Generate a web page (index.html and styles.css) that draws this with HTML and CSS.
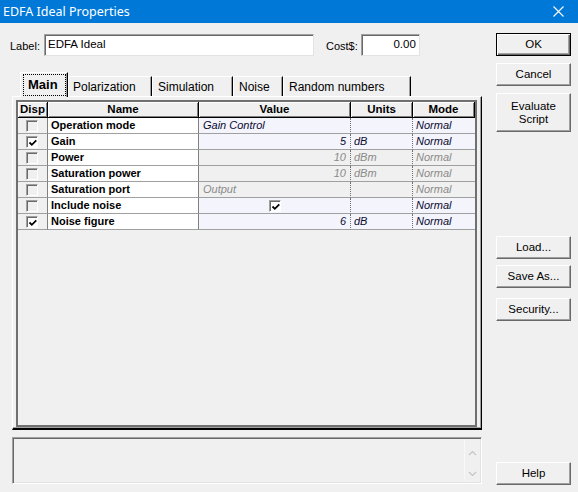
FILE: index.html
```html
<!DOCTYPE html>
<html>
<head>
<meta charset="utf-8">
<link rel="stylesheet" href="styles.css">
</head>
<body>
<div class="titlebar">
  <span class="title">EDFA Ideal Properties</span>
  <svg class="close" width="11" height="11" viewBox="0 0 11 11"><path d="M0.5 0.5 L10.5 10.5 M10.5 0.5 L0.5 10.5" stroke="#fff" stroke-width="1.1" fill="none"/></svg>
</div>
<div class="content">
  <div class="left">
    <div class="labelrow">
      <span class="lbl">Label:</span>
      <div class="input name-input">EDFA Ideal</div>
      <span class="lbl cost">Cost$:</span>
      <div class="input cost-input">0.00</div>
    </div>
    <div class="tabs">
      <div class="tab selected"><span class="focus">Main</span></div>
      <div class="tab t-pol">Polarization</div>
      <div class="tab t-sim">Simulation</div>
      <div class="tab t-noise">Noise</div>
      <div class="tab t-rand">Random numbers</div>
    </div>
    <div class="panel">
      <div class="grid">
        <div class="hd">Disp</div>
        <div class="hd">Name</div>
        <div class="hd">Value</div>
        <div class="hd">Units</div>
        <div class="hd">Mode</div>

        <div class="c disp"><span class="cb"></span></div>
        <div class="c name">Operation mode</div>
        <div class="c val en">Gain Control</div>
        <div class="c unit en"></div>
        <div class="c mode en">Normal</div>

        <div class="c disp"><span class="cb on"><svg width="10" height="10" viewBox="0 0 10 10"><path d="M1.5 4.5 L3.8 6.8 L8.3 2.3" stroke="#000" stroke-width="1.8" fill="none"/></svg></span></div>
        <div class="c name">Gain</div>
        <div class="c val en num">5</div>
        <div class="c unit en">dB</div>
        <div class="c mode en">Normal</div>

        <div class="c disp"><span class="cb"></span></div>
        <div class="c name">Power</div>
        <div class="c val dis num">10</div>
        <div class="c unit dis">dBm</div>
        <div class="c mode dis">Normal</div>

        <div class="c disp"><span class="cb"></span></div>
        <div class="c name">Saturation power</div>
        <div class="c val dis num">10</div>
        <div class="c unit dis">dBm</div>
        <div class="c mode dis">Normal</div>

        <div class="c disp"><span class="cb"></span></div>
        <div class="c name">Saturation port</div>
        <div class="c val dis">Output</div>
        <div class="c unit dis"></div>
        <div class="c mode dis">Normal</div>

        <div class="c disp"><span class="cb"></span></div>
        <div class="c name">Include noise</div>
        <div class="c val en center"><span class="cb on"><svg width="10" height="10" viewBox="0 0 10 10"><path d="M1.5 4.5 L3.8 6.8 L8.3 2.3" stroke="#000" stroke-width="1.8" fill="none"/></svg></span></div>
        <div class="c unit en"></div>
        <div class="c mode en">Normal</div>

        <div class="c disp"><span class="cb on"><svg width="10" height="10" viewBox="0 0 10 10"><path d="M1.5 4.5 L3.8 6.8 L8.3 2.3" stroke="#000" stroke-width="1.8" fill="none"/></svg></span></div>
        <div class="c name">Noise figure</div>
        <div class="c val en num">6</div>
        <div class="c unit en">dB</div>
        <div class="c mode en">Normal</div>
      </div>
    </div>
    <div class="msgbox">
      <div class="scroll">
        <svg width="9" height="6" viewBox="0 0 9 6"><path d="M1 5 L4.5 1.5 L8 5" stroke="#c4c4c4" stroke-width="1.2" fill="none"/></svg>
        <svg width="9" height="6" viewBox="0 0 9 6"><path d="M1 1 L4.5 4.5 L8 1" stroke="#c4c4c4" stroke-width="1.2" fill="none"/></svg>
      </div>
    </div>
  </div>
  <div class="right">
    <div class="btn default b-ok">OK</div>
    <div class="btn b-cancel">Cancel</div>
    <div class="btn tall b-eval">Evaluate<br>Script</div>
    <div class="btn b-load">Load...</div>
    <div class="btn b-save">Save As...</div>
    <div class="btn b-sec">Security...</div>
    <div class="btn b-help">Help</div>
  </div>
</div>
</body>
</html>
```
FILE: styles.css
```css
* { box-sizing: border-box; }
body {
  margin: 0;
  width: 578px;
  height: 492px;
  overflow: hidden;
  background: #f0f0f0;
  font-family: "Liberation Sans", Arial, sans-serif;
  font-size: 11px;
  color: #000;
}
.titlebar {
  height: 23px;
  background: #0078d7;
  color: #fff;
  display: flex;
  align-items: center;
  justify-content: space-between;
  padding: 0 14px 1px 3px;
}
.title {
  font-family: "Noto Sans", sans-serif;
  font-size: 12.5px;
}
.content {
  display: flex;
}
.left {
  margin-left: 12px;
  width: 470px;
}
.labelrow {
  margin-top: 11px;
  margin-left: -2px;
  height: 22px;
  display: flex;
  align-items: center;
}
.lbl { padding-top: 1px; }
.input {
  height: 22px;
  background: #fff;
  border: 1px solid;
  border-color: #a0a0a0 #e3e3e3 #e3e3e3 #a0a0a0;
  box-shadow: inset 1px 1px #696969;
  padding: 3px 3px 0 3px;
  font-size: 11.5px;
}
.name-input { width: 270px; margin-left: 4px; }
.cost { margin-left: 12px; }
.cost-input { width: 59px; margin-left: 3px; text-align: right; }

.tabs {
  margin-top: 16px;
  height: 24px;
  display: flex;
  align-items: flex-end;
  padding-left: 8px;
  position: relative;
  z-index: 1;
}
.tab {
  height: 20px;
  border-top: 1px solid #fff;
  border-left: 1px solid #fff;
  border-right: 1px solid #000;
  box-shadow: inset -1px 0 #a0a0a0;
  font-size: 12px;
  padding: 3px 0 0 4px;
  margin-bottom: 0;
}
.tab.selected {
  height: 25px;
  width: 48px;
  margin-bottom: -1px;
  background: #f0f0f0;
  padding: 1px 0 0 2px;
  font-weight: bold;
  font-size: 13px;
}
.focus {
  display: block;
  width: 43px;
  height: 22px;
  border: 1px dotted #000;
  padding: 2px 0 0 4px;
}
.t-pol { width: 84px; }
.t-sim { width: 81px; padding-left: 5px; }
.t-noise { width: 50px; padding-left: 5px; }
.t-rand { width: 128px; padding-left: 5px; }

.panel {
  height: 334px;
  border-top: 1px solid #fff;
  border-left: 1px solid #fff;
  border-right: 1px solid #000;
  border-bottom: 2px solid #000;
  box-shadow: inset -1px -1px #a0a0a0;
  padding: 3px 0 0 3px;
}
.grid {
  width: 461px;
  height: 327px;
  border: 2px solid #707070;
  display: grid;
  grid-template-columns: 30px 151px 152px 62px 62px;
  grid-auto-rows: 16px;
  align-content: start;
}
.hd {
  font-weight: bold;
  font-size: 11.5px;
  text-align: center;
  border-right: 1px solid #000;
  border-bottom: 1px solid #000;
  box-shadow: inset 1px 1px #fff, inset -1px -1px #808080;
  line-height: 15px;
}
.hd:first-child { text-align: left; padding-left: 2px; }
.c {
  border-bottom: 1px solid #a0a0a0;
  line-height: 15px;
  white-space: nowrap;
  overflow: hidden;
}
.disp {
  background: #f0f0f0;
  border-right: 1px solid #808080;
  padding: 2px 0 0 8px;
}
.name {
  background: #fff;
  font-weight: bold;
  padding-left: 3px;
  border-right: 1px solid #808080;
}
.val, .unit, .mode { font-style: italic; }
.val { padding: 0 4px; border-right: 1px dotted #707070; }
.unit { padding-left: 3px; border-right: 1px dotted #707070; }
.mode { padding-left: 3px; }
.en { background: #f4f4fd; color: #0a0a30; }
.dis { background: #f0f0f0; color: #8a8a8a; }
.num { text-align: right; }
.center { padding: 2px 0 0 70px; }
.cb {
  display: block;
  width: 12px;
  height: 12px;
  border: 1px solid;
  border-color: #a0a0a0 #fff #fff #a0a0a0;
  box-shadow: inset 1px 1px #696969;
  background: #f0f0f0;
  padding: 1px 0 0 1px;
}
.cb.on { background: #fff; }
.cb svg { display: block; }

.msgbox {
  margin-top: 7px;
  height: 47px;
  border: 1px solid;
  border-color: #a0a0a0 #fff #fff #a0a0a0;
  box-shadow: inset 1px 1px #696969, inset -1px -1px #e3e3e3;
  display: flex;
  justify-content: flex-end;
}
.scroll {
  width: 16px;
  margin: 2px 1px 2px 0;
  border-left: 1px solid #f8f8f8;
  display: flex;
  flex-direction: column;
  justify-content: space-between;
  align-items: center;
  padding: 10px 0 4px;
}
.scroll svg { display: block; }

.right {
  margin-left: 14px;
  width: 75px;
  display: flex;
  flex-direction: column;
}
.btn {
  height: 23px;
  background: #f0f0f0;
  border: 1px solid;
  border-color: #fff #696969 #696969 #fff;
  box-shadow: inset -1px -1px #a0a0a0;
  display: flex;
  align-items: center;
  justify-content: center;
  text-align: center;
  font-size: 11.5px;
  line-height: 13px;
}
.btn.default {
  border: 1px solid #000;
  box-shadow: inset 1px 1px #fff, inset -1px -1px #696969, inset -2px -2px #a0a0a0;
}
.btn.tall { height: 39px; }
.b-ok { margin-top: 10px; }
.b-cancel { margin-top: 7px; }
.b-eval { margin-top: 7px; }
.b-load { margin-top: 104px; }
.b-save { margin-top: 6px; }
.b-sec { margin-top: 10px; }
.b-help { margin-top: 141px; }
```
